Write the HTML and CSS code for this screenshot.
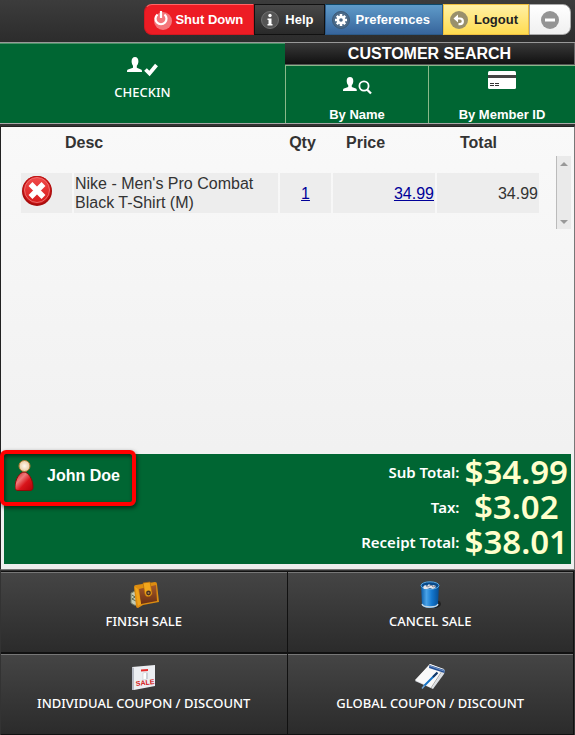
FILE: index.html
```
<!DOCTYPE html>
<html lang="en">
<head>
  <meta charset="UTF-8">
  <meta name="viewport" content="width=device-width, initial-scale=1.0">
  <title>Point of Sale</title>
  <link rel="stylesheet" href="styles.css">
</head>
<body>
  <header class="toolbar">
    <button class="tool tool-red" type="button">
      <svg width="20" height="20" viewBox="0 0 20 20"><circle cx="10" cy="11" r="9" fill="#fff" opacity=".4"/><path d="M4.500 4.500a5.500 5.500 0 1 0 7 0M8 1v7" fill="none" stroke="#fff" stroke-width="2.200"/></svg>
      Shut Down
    </button>
    <button class="tool tool-dark" type="button">
      <svg width="20" height="20" viewBox="0 0 20 20"><circle cx="10" cy="10" r="8.500" fill="#555" stroke="#707070"/><circle cx="10" cy="5.500" r="1.700" fill="#fff"/><path d="M7.500 8.500H11.500V14h1v1.500h-5V14h1v-4h-1z" fill="#fff"/></svg>
      Help
    </button>
    <button class="tool tool-blue" type="button">
      <svg width="20" height="20" viewBox="0 0 20 20"><circle cx="10" cy="10" r="8.500" fill="#4b6a88" stroke="#3b5a78"/><path d="M10 4v12M4 10h12M5.800 5.800l8.400 8.400M14.200 5.800l-8.400 8.400" stroke="#fff" stroke-width="2.600"/><circle cx="10" cy="10" r="4.300" fill="#fff"/><circle cx="10" cy="10" r="1.800" fill="#4b6a88"/></svg>
      Preferences
    </button>
    <button class="tool tool-yellow" type="button">
      <svg width="20" height="20" viewBox="0 0 20 20"><circle cx="10" cy="10" r="9" fill="#99906c"/><path d="M6.500 8.500h4.500a2.800 2.800 0 0 1 0 5.700H9.500" fill="none" stroke="#fff" stroke-width="2.200"/><path d="M4.500 8.500L9 4.500v8z" fill="#fff"/></svg>
      Logout
    </button>
    <button class="tool tool-white" type="button" aria-label="Minimize">
      <svg width="20" height="20" viewBox="0 0 20 20"><circle cx="10" cy="10" r="9" fill="#949494"/><path d="M5 10h10" stroke="#fff" stroke-width="3"/></svg>
    </button>
  </header>

  <nav class="customer-nav">
    <button class="checkin" type="button">
      <svg width="32" height="20" viewBox="0 0 32 20"><path d="M8 0c2.200 0 3.400 1.700 3.400 4.200 0 2-.8 3.600-1.600 4.500v2.100l4.200 1.800c.8.400 1 .9 1 2.400H0c0-1.500.2-2 1-2.400l5-1.800V8.700C5.400 7.800 4.600 6.200 4.600 4.200 4.600 1.700 5.800 0 8 0z" fill="#fff"/><path d="M18.500 12.500l4 4L29.500 8" fill="none" stroke="#fff" stroke-width="3.800"/></svg>
      <span>CHECKIN</span>
    </button>
    <section class="search">
      <h2>CUSTOMER SEARCH</h2>
      <div class="search-buttons">
        <button type="button">
          <svg width="30" height="20" viewBox="0 0 30 20"><path d="M8 1c2.200 0 3.300 1.600 3.300 3.900 0 1.900-.7 3.400-1.500 4.200v1.800l4 1.700c.8.300 1 .9 1 2.400H1c0-1.500.2-2.100 1-2.400l4.200-1.700V9.100C5.400 8.300 4.700 6.800 4.700 4.900 4.700 2.600 5.800 1 8 1z" fill="#fff"/><circle cx="22" cy="10" r="4.600" fill="none" stroke="#fff" stroke-width="1.800"/><path d="M25 13.500l4 4" stroke="#fff" stroke-width="2.300"/></svg>
          By Name
        </button>
        <button type="button">
          <svg width="28" height="32" viewBox="0 0 28 32"><rect y="1" width="28" height="18" rx="1.500" fill="#fff"/><path d="M0 6.500h28" stroke="#444" stroke-width="3"/><path d="M2 13.500h4m1 0h4m-9 2h4m1 0h4" stroke="#333"/></svg>
          By Member ID
        </button>
      </div>
    </section>
  </nav>

  <main class="sale">
    <div class="register">
      <table class="items">
        <colgroup>
          <col class="col-remove"><col class="col-desc"><col class="col-qty"><col class="col-price"><col class="col-total">
        </colgroup>
        <thead>
          <tr>
            <th class="head-desc" colspan="2">Desc</th>
            <th class="head-qty">Qty</th>
            <th class="head-price">Price</th>
            <th class="head-total">Total</th>
          </tr>
        </thead>
        <tbody>
          <tr>
            <td class="remove-cell">
              <button class="remove" type="button" aria-label="Remove item">
                <svg width="32" height="32" viewBox="0 0 32 32">
                  <defs><linearGradient id="red" x2="0" y2="1"><stop stop-color="#f04a4a"/><stop offset="1" stop-color="#d81b1b"/></linearGradient></defs>
                  <circle cx="16" cy="16" r="15" fill="#a80d0d"/><circle cx="16" cy="15" r="14" fill="#c51414"/><circle cx="16" cy="15" r="12.500" fill="url(#red)" stroke="#f28080" stroke-width=".8"/>
                  <path d="M9.500 9l13 13M22.500 9l-13 13" stroke="#fff" stroke-width="5.500"/>
                </svg>
              </button>
            </td>
            <td class="desc">Nike - Men's Pro Combat Black T-Shirt (M)</td>
            <td class="qty"><a href="#">1</a></td>
            <td class="money"><a href="#">34.99</a></td>
            <td class="money">34.99</td>
          </tr>
        </tbody>
      </table>
      <div class="scroller" aria-hidden="true">
        <svg width="8" height="4" viewBox="0 0 8 4"><path d="M0 4l4-4 4 4z"/></svg>
        <svg width="8" height="4" viewBox="0 0 8 4"><path d="M0 0l4 4 4-4z"/></svg>
      </div>
    </div>

    <section class="summary">
      <div class="customer">
        <svg width="20" height="32" viewBox="0 0 20 32">
          <defs>
            <linearGradient id="robe" x1="0" y1="0" x2="1" y2="1"><stop stop-color="#c80d14"/><stop offset=".35" stop-color="#ef7a7a"/><stop offset=".6" stop-color="#d9141b"/><stop offset="1" stop-color="#b00008"/></linearGradient>
            <radialGradient id="head"><stop stop-color="#fff8ec"/><stop offset="1" stop-color="#e9cda4"/></radialGradient>
          </defs>
          <path d="M9 12c4 0 9 7 9 15 0 2.500-1 3.500-3 3.500H3c-2 0-3-1-3-3.500C0 19 5 12 9 12z" fill="url(#robe)" stroke="#8d0b08"/>
          <circle cx="9.500" cy="6" r="5.500" fill="url(#head)" stroke="#b27a34"/>
        </svg>
        John Doe
        <span class="highlight"></span>
      </div>
      <dl class="totals">
        <dt>Sub Total:</dt><dd>$34.99</dd>
        <dt>Tax:</dt><dd>$3.02</dd>
        <dt>Receipt Total:</dt><dd>$38.01</dd>
      </dl>
    </section>
  </main>

  <footer class="actions">
    <button type="button">
      <svg width="32" height="28" viewBox="0 0 32 28">
        <defs><linearGradient id="leather" x2="0" y2="1"><stop stop-color="#a65a2a"/><stop offset="1" stop-color="#6b2f12"/></linearGradient></defs>
        <path d="M3 12l4-2 4 15-5-1-3-2z" fill="#c3cbb5" stroke="#6f7b62"/><path d="M4 14l3 2-3 2 4 2" fill="none" stroke="#56634c"/>
        <path d="M6 6q0-2 2-2l19-3q2 0 2 2l2 18-16 3-5 3q-2 0-2-2z" fill="#dd8d10"/><path d="M11 8l17-4 1 16-16 3z" fill="url(#leather)"/><path d="M7 6l3 2 3 15-3 2z" fill="#f0a51b"/>
        <path d="M15 2l7-1 2 11c0 4-6 5-7 1z" fill="#f2a71c" stroke="#b86b08" stroke-width=".7"/><circle cx="20.500" cy="12" r="2.400" fill="#473022"/><circle cx="20.500" cy="12" r="1" fill="#a77a51"/>
      </svg>
      <span>FINISH SALE</span>
    </button>
    <button type="button">
      <svg width="22" height="28" viewBox="2 0 22 28">
        <defs><linearGradient id="can"><stop stop-color="#0a5aa5"/><stop offset=".3" stop-color="#4aa3e8"/><stop offset=".6" stop-color="#1478cf"/><stop offset="1" stop-color="#064c92"/></linearGradient></defs>
        <ellipse cx="18" cy="23" rx="6" ry="4" fill="#111" opacity=".6"/>
        <path d="M4 4l1 20c1 4 15 4 16 0l1-20z" fill="url(#can)"/><path d="M5 23c1 4 15 4 16 0" fill="none" stroke="#c5d7e4" stroke-width="1.300"/>
        <ellipse cx="13" cy="4.500" rx="9" ry="3.700" fill="#094a8a" stroke="#59a9e5"/><path d="M6 6l2-2 2 1 2-2 2 2 3-1 2 2-3 2-3-1-3 1-3 0z" fill="#e4e5ea"/><path d="M9 5l2 1 3-2 2 2 3-1" fill="none" stroke="#8f8f9c"/>
      </svg>
      <span>CANCEL SALE</span>
    </button>
    <button type="button">
      <svg width="24" height="28" viewBox="0 0 24 28">
        <path d="M0 4l23-2v21L2 27H0z" fill="#eceef2"/><path d="M0 4l2 1v22H0z" fill="#b6bac4"/><path d="M9 6.500l7-.5v2l-7 .5z" fill="#e52b2b"/><path d="M11 10l4-1v7l-4 1z" fill="#fff" stroke="#bfc3cb" stroke-width=".5"/><path d="M14 10h2v6h-2z" fill="#ccd0d8"/>
        <text x="4" y="23" class="sale-tag" transform="rotate(-6 4 23)">SALE</text>
      </svg>
      <span>INDIVIDUAL COUPON / DISCOUNT</span>
    </button>
    <button type="button">
      <svg width="32" height="28" viewBox="0 0 32 28">
        <path d="M16 1l15 6-1 4-11 15L1 18z" fill="#d9dde2"/><path d="M16 1l14 5-12 19L1 17z" fill="#f9f9f9"/><path d="M28 8L17 25" stroke="#aaa"/>
        <path d="M15.500 2l15 5v3l-15.500-5z" fill="#234f94"/><path d="M16 3l14 5" stroke="#8eacd8" stroke-width=".7"/>
        <path d="M23 10L10 23" stroke="#1673c6" stroke-width="2"/><path d="M23.500 9.500L19 14" stroke="#173967" stroke-width="2"/><path d="M10.500 22.500L8 25.500" stroke="#73a7d5" stroke-width="1.500"/>
      </svg>
      <span>GLOBAL COUPON / DISCOUNT</span>
    </button>
  </footer>
</body>
</html>
```
FILE: styles.css
```
:root {
  --green: #006633;
  --line: #8ab88a;
  --dark: #333333;
  --text: #333333;
}

* {
  box-sizing: border-box;
}

body {
  margin: 0;
  min-height: 100vh;
  display: flex;
  flex-direction: column;
  font-family: "Liberation Sans", Arial, sans-serif;
  font-size: 16px;
  color: var(--text);
  background: var(--dark);
}

button {
  margin: 0;
  padding: 0;
  border: 0;
  font: inherit;
  color: #fff;
  background: none;
  cursor: pointer;
}

svg {
  display: block;
  flex: none;
}

/* top toolbar */
.toolbar {
  display: flex;
  justify-content: flex-end;
  height: 43px;
  padding: 4px 4px 0 0;
  border-bottom: 1px solid #999;
  background: linear-gradient(#3c3c3c, #2c2c2c);
}

.tool {
  display: flex;
  align-items: center;
  gap: 5px;
  height: 31px;
  padding: 0 10px 0 5px;
  border: 1px solid;
  font-size: 13px;
  font-weight: bold;
}

.tool-red {
  padding: 0 10px 0 8px;
  gap: 2px;
  border-color: #d31820;
  border-top-color: #f66;
  border-radius: 8px 0 0 8px;
  background: #ed1c24;
}

.tool-dark {
  border-color: #111;
  background: linear-gradient(#484848, #292929);
}

.tool-blue {
  padding-right: 12px;
  border-color: #2c5a88;
  border-top-color: #0e4868;
  background: linear-gradient(#5f9bc9, #37659c);
}

.tool-yellow {
  border-color: #f0c040;
  color: #222;
  background: linear-gradient(#fff0a5, #ffdc50);
}

.tool-white {
  padding: 0 10px;
  border-color: #aaa;
  border-radius: 0 8px 8px 0;
  background: linear-gradient(#fff, #f0f0f0);
}

/* customer check-in and search */
.customer-nav {
  display: grid;
  grid-template-columns: 285fr 290fr;
  border-bottom: 1px solid #aaa;
  background: var(--green);
}

.checkin {
  display: flex;
  flex-direction: column;
  align-items: center;
  padding-top: 13px;
  border-top: 1px solid #4b9468;
}

.checkin span,
.actions span {
  font-family: "Noto Sans", "Open Sans", sans-serif;
  font-size: 13px;
  font-weight: 500;
  line-height: 20px;
}

.checkin span {
  margin-top: 5px;
}

.search h2 {
  margin: 0;
  font-size: 16px;
  line-height: 21px;
  text-align: center;
  color: #fff;
  border-right: 1px solid #666;
  border-bottom: 1px solid #555;
  background: linear-gradient(#393939, #111);
}

.search-buttons {
  display: grid;
  grid-template-columns: 143fr 147fr;
}

.search-buttons button {
  display: flex;
  flex-direction: column;
  align-items: center;
  justify-content: flex-end;
  height: 58px;
  border-top: 1px solid var(--line);
  border-left: 1px solid var(--line);
  font-size: 13px;
  font-weight: bold;
  line-height: 16px;
}

.search-buttons svg {
  margin-bottom: 11px;
}

.search-buttons button + button svg {
  margin-bottom: 5px;
}

/* items in the sale */
.sale {
  flex: 1;
  display: flex;
  flex-direction: column;
  margin-top: 2px;
  padding: 0 3px 5px;
  border: 1px solid #222;
  border-right-color: #777;
  border-bottom-color: #777;
  background: linear-gradient(#f9f9f9, #eee);
}

.register {
  flex: 1;
  display: flex;
  align-items: flex-start;
  gap: 15px;
}

.items {
  flex: 1;
  margin-left: 15px;
  table-layout: fixed;
  border-spacing: 2px;
}

.col-remove,
.col-qty {
  width: 10%;
}

.col-desc {
  width: 40%;
}

.col-price,
.col-total {
  width: 20%;
}

.items th {
  height: 42px;
  padding: 4px 0 0;
  line-height: 20px;
  text-align: left;
  vertical-align: top;
}

.items .head-desc {
  padding-left: 44px;
}

.items .head-qty {
  padding-right: 6px;
  text-align: center;
}

.items .head-price {
  padding-left: 13px;
}

.items .head-total {
  padding-left: 23px;
}

.items td {
  height: 40px;
  padding: 1px;
  line-height: 19px;
  background: #ededed;
}

.items .remove-cell {
  padding: 2px 0;
  vertical-align: top;
}

.items .qty {
  text-align: center;
}

.items .money {
  text-align: right;
}

.items a {
  color: #000099;
}

.remove {
  display: block;
}

.scroller {
  display: flex;
  flex-direction: column;
  justify-content: space-between;
  align-items: center;
  width: 15px;
  height: 73px;
  margin-top: 29px;
  padding: 6px 0 5px;
  border-left: 1px solid #bbb;
  background: #eaeaea;
  fill: #999;
}

/* customer and totals */
.summary {
  display: flex;
  justify-content: space-between;
  align-items: flex-start;
  height: 110px;
  color: #fff;
  background: var(--green);
}

.customer {
  position: relative;
  display: flex;
  align-items: center;
  gap: 12px;
  height: 44px;
  padding: 0 12px 0 11px;
  font-weight: bold;
}

.highlight {
  position: absolute;
  inset: -4px -4px -8px -4px;
  border: 4px solid #f00;
  border-radius: 6px;
  box-shadow: 1px 2px 4px rgba(0, 0, 0, 0.6), inset 1px 2px 4px rgba(0, 0, 0, 0.6);
}

.totals {
  display: grid;
  grid-template-columns: auto auto;
  grid-auto-rows: 35px;
  align-items: center;
  column-gap: 5px;
  margin: 0;
  padding: 0 3px 0 0;
  font-family: "Noto Sans", "Open Sans", sans-serif;
  font-weight: 600;
}

.totals dt {
  font-size: 15px;
  text-align: right;
}

.totals dd {
  margin: 0;
  font-size: 33px;
  line-height: 35px;
  text-align: center;
  color: #ffffcc;
}

/* bottom menu */
.actions {
  display: grid;
  grid-template-columns: 1fr 1fr;
  padding: 1px 1px 0;
}

.actions button {
  display: flex;
  flex-direction: column;
  align-items: center;
  height: 82px;
  padding-top: 9px;
  border: 1px solid #111;
  border-width: 1px 1px 1px 0;
  box-shadow: inset 0 1px #777;
  background: linear-gradient(#454545, #2b2b2b);
}

.actions span {
  margin-top: 2px;
}

.sale-tag {
  font-size: 7px;
  font-weight: bold;
  fill: #d41414;
}
```
